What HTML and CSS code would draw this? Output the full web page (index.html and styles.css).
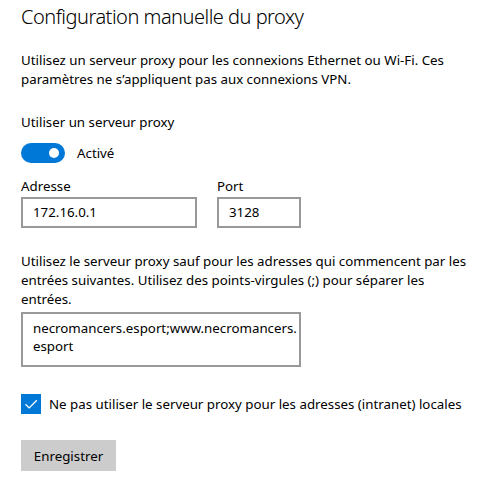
FILE: index.html
```html
<!DOCTYPE html>
<html lang="fr">
<head>
<meta charset="utf-8">
<link rel="stylesheet" href="styles.css">
</head>
<body>
<div class="page">
  <h1 class="title">Configuration manuelle du proxy</h1>
  <p class="desc">Utilisez un serveur proxy pour les connexions Ethernet ou Wi-Fi. Ces paramètres ne s’appliquent pas aux connexions VPN.</p>
  <div class="label use">Utiliser un serveur proxy</div>
  <div class="toggle-row">
    <span class="toggle"><span class="knob"></span></span>
    <span class="toggle-text">Activé</span>
  </div>
  <div class="fields">
    <div class="field addr">
      <div class="label">Adresse</div>
      <div class="input">172.16.0.1</div>
    </div>
    <div class="field port">
      <div class="label">Port</div>
      <div class="input">3128</div>
    </div>
  </div>
  <p class="desc exc">Utilisez le serveur proxy sauf pour les adresses qui commencent par les entrées suivantes. Utilisez des points-virgules (;) pour séparer les entrées.</p>
  <div class="textarea">necromancers.esport;www.necromancers.<br>esport</div>
  <div class="check-row">
    <span class="checkbox"><svg width="20" height="20" viewBox="0 0 20 20"><path d="M4.5 10.2 L8.2 13.9 L15.8 6.3" fill="none" stroke="#fff" stroke-width="1.3"/></svg></span>
    <span class="check-text">Ne pas utiliser le serveur proxy pour les adresses (intranet) locales</span>
  </div>
  <button class="btn">Enregistrer</button>
</div>
</body>
</html>
```
FILE: styles.css
```css
html, body { margin: 0; padding: 0; background: #fff; }
body { font-family: "Noto Sans", "Open Sans", sans-serif; color: #000; font-size: 13.3px; }
.page { padding: 0 21px; }
.title { margin: 0; padding-top: 3px; font-size: 20px; letter-spacing: -0.5px; font-weight: 350; line-height: 28px; }
.desc { margin: 20px 0 0; line-height: 19px; }
.label { line-height: 19px; }
.use { margin-top: 24px; }
.toggle-row { display: flex; align-items: center; margin-top: 10px; height: 22px; }
.toggle { width: 44px; height: 20px; border-radius: 10px; background: #0078d7; position: relative; }
.knob { position: absolute; width: 10px; height: 10px; border-radius: 50%; background: #fff; top: 5px; right: 6px; }
.toggle-text { margin-left: 12px; }
.fields { display: flex; gap: 20px; margin-top: 13px; }
.input { box-sizing: border-box; height: 31px; border: 2px solid #999; padding: 0 10px; line-height: 27px; margin-top: 1px; }
.addr .input { width: 176px; }
.port .input { width: 84px; }
.exc { margin-top: 24px; width: 455px; }
.textarea { box-sizing: border-box; width: 280px; height: 55px; border: 2px solid #999; padding: 5px 10px 0; line-height: 18px; margin-top: 3px; }
.check-row { display: flex; align-items: center; margin-top: 27px; }
.checkbox { width: 20px; height: 20px; background: #0078d7; display: block; flex: none; }
.checkbox svg { display: block; }
.check-text { margin-left: 8px; white-space: nowrap; }
.btn { display: block; margin-top: 26px; width: 95px; height: 31px; background: #ccc; border: 0; padding: 0; font: inherit; color: #000; }
```
